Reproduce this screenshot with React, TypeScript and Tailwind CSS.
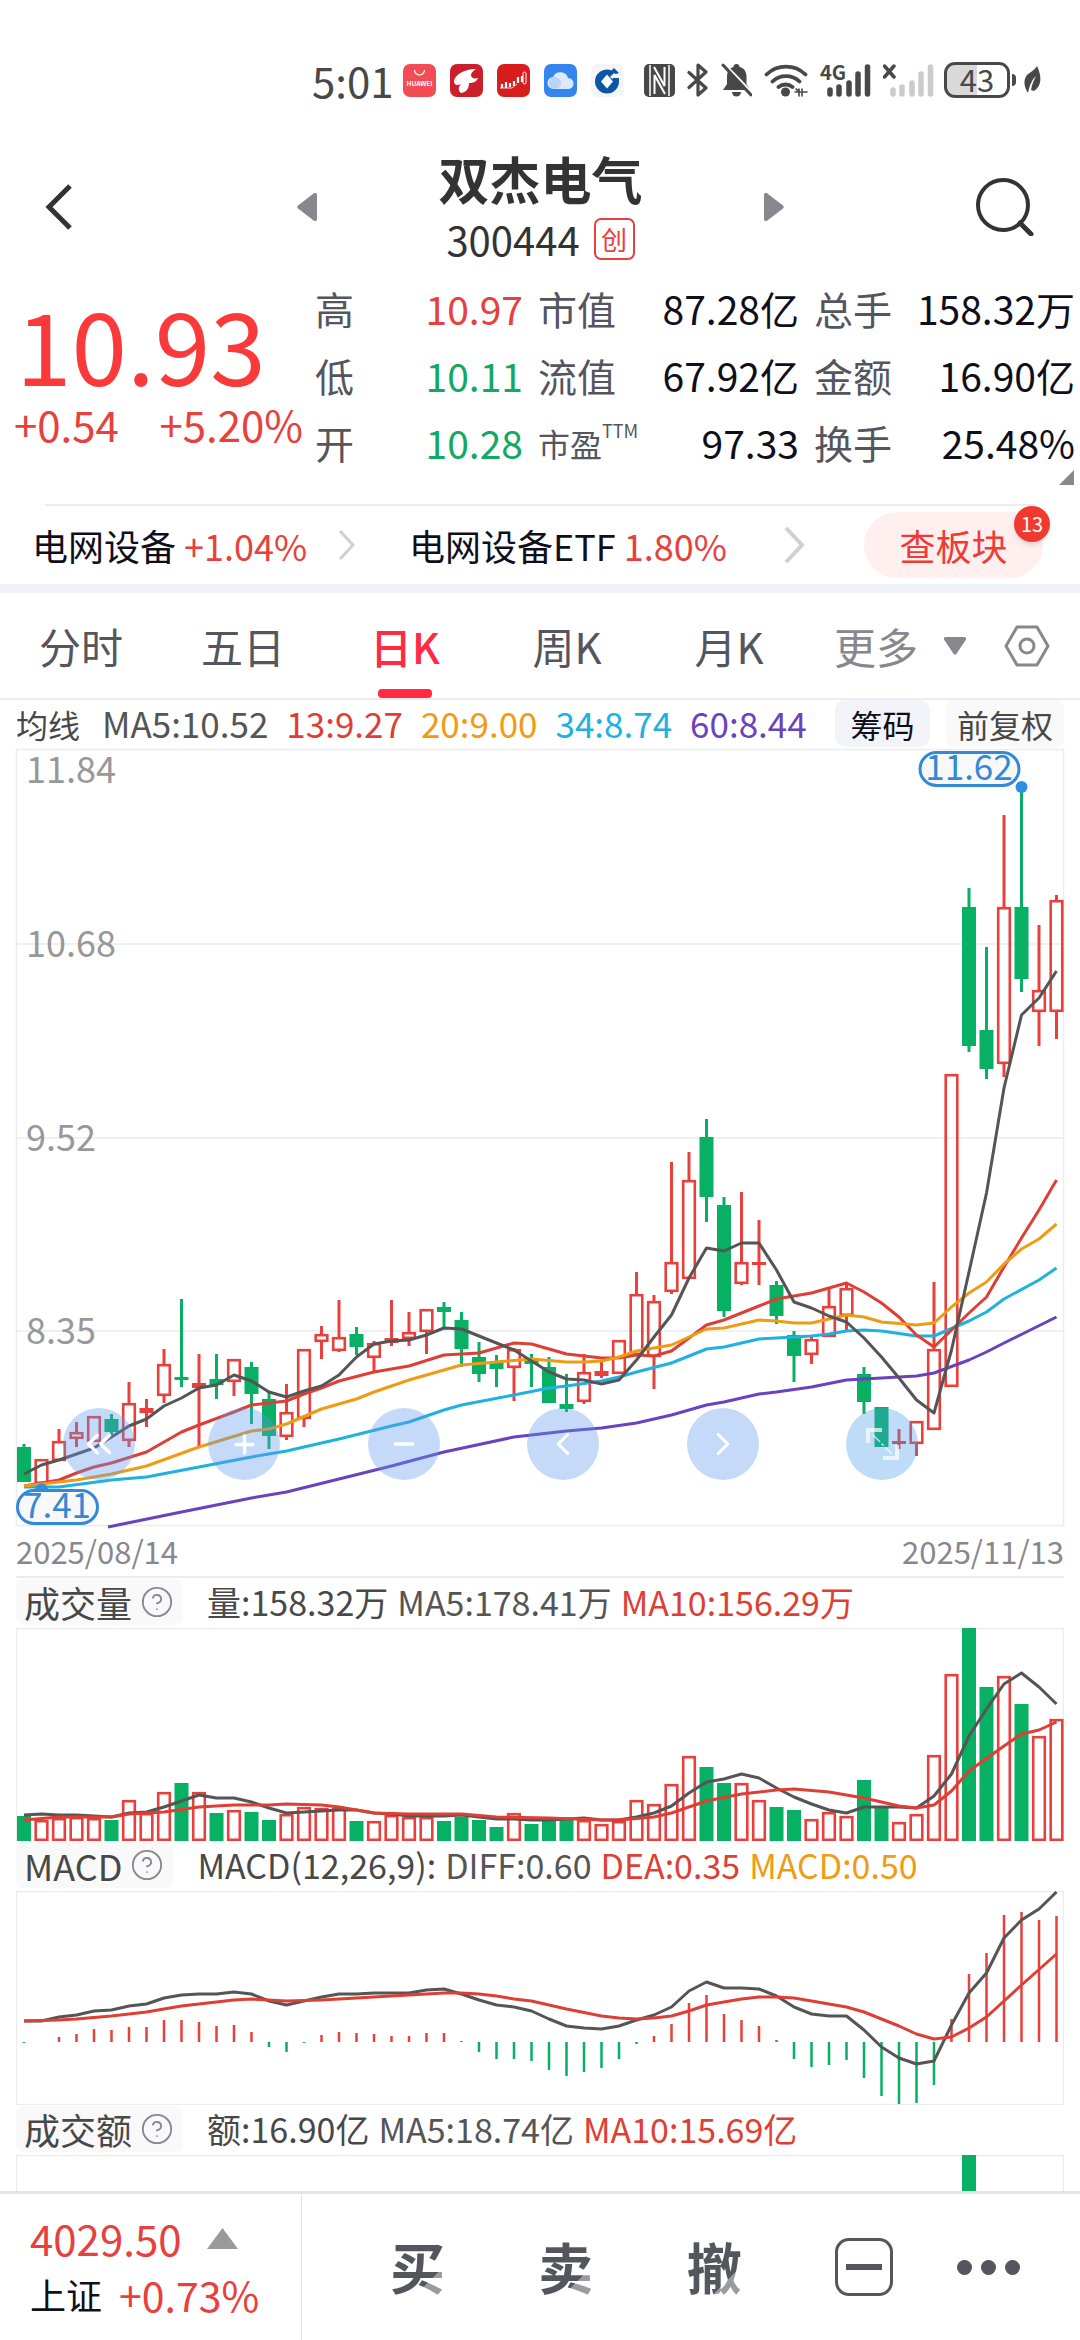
import { ChevronLeft, ChevronRight, ChevronsLeft, CircleHelp, Minus, Plus } from "lucide-react";

const RED = "#e8403c";
const GREEN = "#07b062";
const LINE_DARK = "#555555";
const LINE_RED = "#de3f35";
const GRID = "#ececec";

const STEP = 17.5;
const FIRST_X = 8;
const px = (i: number) => FIRST_X + i * STEP;

type Point = [number, number];

// [direction, high, body top, body bottom, low]
const CANDLES: [string, number, number, number, number][] = [
  ["g", 695, 698, 733, 733], ["r", 710, 710, 735, 737], ["r", 680, 692, 712, 712], ["r", 673, 683, 690, 698],
  ["r", 667, 667, 693, 693], ["g", 665, 670, 683, 688], ["r", 633, 654, 692, 698], ["r", 650, 659, 664, 678],
  ["r", 600, 615, 647, 654], ["g", 550, 628, 631, 638], ["r", 605, 634, 639, 698], ["g", 605, 630, 636, 650],
  ["r", 610, 610, 633, 647], ["g", 613, 618, 645, 675], ["g", 643, 650, 687, 700], ["r", 635, 663, 688, 691],
  ["r", 600, 600, 670, 678], ["r", 577, 585, 593, 610], ["r", 551, 588, 602, 603], ["g", 578, 585, 598, 606],
  ["r", 592, 594, 609, 624], ["r", 551, 589, 594, 597], ["r", 563, 583, 590, 597], ["r", 560, 560, 583, 605],
  ["g", 553, 558, 563, 578], ["g", 563, 571, 600, 618], ["g", 593, 608, 625, 633], ["g", 606, 613, 620, 638],
  ["r", 599, 600, 619, 652], ["g", 605, 611, 615, 638], ["g", 608, 618, 654, 654], ["g", 625, 655, 660, 663],
  ["r", 605, 623, 653, 655], ["r", 612, 622, 627, 629], ["r", 591, 591, 625, 625], ["r", 523, 545, 606, 606],
  ["r", 546, 552, 608, 640], ["r", 413, 513, 543, 545], ["r", 403, 431, 530, 530], ["g", 370, 388, 448, 473],
  ["g", 448, 456, 562, 568], ["r", 443, 513, 535, 536], ["r", 471, 513, 516, 536], ["g", 532, 536, 567, 575],
  ["g", 582, 586, 607, 633], ["r", 588, 590, 606, 615], ["r", 538, 557, 588, 588], ["r", 534, 539, 567, 582],
  ["g", 618, 625, 653, 665], ["g", 658, 658, 698, 698], ["r", 680, 692, 695, 700], ["r", 672, 672, 695, 707],
  ["r", 533, 600, 681, 681], ["r", 325, 325, 638, 638], ["g", 139, 158, 297, 303], ["g", 198, 281, 320, 330],
  ["r", 66, 158, 315, 328], ["g", 38, 158, 230, 243], ["r", 176, 241, 263, 297], ["r", 146, 151, 263, 290],
];

const series = (ys: number[]): Point[] => ys.map((y, i) => [i, y]);

const PRICE_LINES: { color: string; points: Point[] }[] = [
  {
    color: "#6a42bd",
    points: [[4.8, 778], [9, 763], [13, 749], [15, 743], [18, 730], [21, 717], [24, 703], [28, 688], [31, 682], [33, 679], [35, 674], [37, 666], [39, 656], [40, 653], [42, 645], [43, 643], [45, 638], [47, 631], [49, 629], [51, 627], [52, 624], [54, 611], [55, 603], [56, 594], [59, 568]],
  },
  {
    color: "#1fb1df",
    points: [[0, 738], [2, 738], [5, 731], [7, 728], [10, 718], [13, 708], [15, 702], [18, 690], [21, 677], [22, 673], [24, 661], [25, 656], [28, 646], [30, 639], [31, 637], [33, 632], [34, 628], [35, 623], [37, 614], [39, 600], [40, 598], [42, 590], [43, 589], [45, 587], [46, 585], [47, 582], [48, 581], [49, 582], [51, 587], [52, 587], [54, 572], [55, 563], [56, 550], [58, 531], [59, 519]],
  },
  {
    color: LINE_RED,
    points: [[0, 737], [1, 734], [2, 731], [3, 724], [4, 718], [5, 714], [7, 703], [8, 693], [9, 683], [10, 676], [12, 663], [13, 656], [14, 654], [15, 652], [16, 645], [17, 639], [18, 632], [20, 623], [21, 620], [22, 617], [24, 606], [26, 604], [28, 594], [29, 595], [31, 605], [33, 609], [34, 609], [35, 606], [36, 607], [37, 602], [38, 589], [39, 576], [40, 571], [42, 557], [43, 550], [44, 547], [45, 544], [46, 539], [47, 534], [48, 543], [49, 554], [50, 568], [51, 586], [52, 598], [53, 581], [54, 564], [55, 548], [56, 518], [57, 489], [58, 461], [59, 431]],
  },
  {
    color: "#ee9c15",
    points: [[0, 737], [3, 731], [5, 725], [7, 717], [10, 698], [13, 682], [14, 680], [15, 675], [17, 660], [18, 655], [19, 650], [20, 643], [21, 637], [22, 631], [25, 616], [27, 613], [29, 610], [31, 613], [32, 613], [33, 612], [34, 608], [35, 602], [37, 596], [38, 588], [39, 580], [40, 579], [42, 571], [43, 572], [44, 574], [45, 574], [46, 570], [47, 566], [48, 568], [49, 573], [51, 576], [52, 574], [53, 558], [54, 544], [55, 533], [56, 515], [57, 500], [58, 490], [59, 475]],
  },
  {
    color: LINE_DARK,
    points: series([725, 716, 711, 705, 699, 688, 677, 670, 657, 649, 639, 636, 626, 632, 643, 648, 642, 637, 626, 608, 595, 592, 591, 586, 579, 580, 587, 594, 601, 612, 623, 630, 631, 635, 631, 611, 588, 566, 529, 499, 502, 494, 494, 521, 553, 559, 567, 573, 589, 608, 629, 651, 664, 601, 523, 444, 339, 266, 249, 222]),
  },
];

const VOLUME_TOPS = [
  188, 192, 190, 189, 190, 192, 172, 185, 164, 155, 164, 185, 182, 184, 192, 186, 179, 180, 180, 193,
  193, 187, 189, 189, 193, 189, 192, 199, 185, 196, 192, 192, 192, 196, 193, 172, 176, 156, 128, 139,
  155, 155, 172, 179, 182, 191, 184, 188, 152, 180, 194, 186, 127, 46, 0, 59, 48, 76, 108, 91,
];

const VOLUME_MA5: Point[] = series([
  187, 186, 187, 187, 188, 189, 185, 184, 179, 173, 167, 170, 170, 174, 180, 185, 184, 183, 182, 182,
  185, 186, 188, 188, 188, 187, 189, 191, 191, 192, 192, 191, 190, 192, 192, 189, 185, 178, 165, 154,
  151, 146, 150, 160, 169, 176, 182, 185, 179, 179, 179, 180, 168, 146, 108, 81, 56, 45, 59, 76,
]);

const VOLUME_MA10: Point[] = [
  [0, 192], [2, 189], [5, 189], [6, 186], [7, 185], [8, 184], [10, 179], [12, 177], [14, 177], [15, 176], [17, 177], [18, 179], [19, 182], [20, 185], [22, 186], [25, 186], [27, 189], [30, 190], [33, 192], [34, 192], [36, 189], [37, 185], [38, 179], [39, 173], [41, 166], [43, 162], [44, 161], [46, 164], [48, 170], [50, 178], [51, 180], [52, 177], [53, 163], [54, 143], [56, 118], [57, 106], [58, 102], [59, 94],
];

const MACD_ZERO = 151;
const MACD_TIPS = [
  152, 151, 146, 143, 138, 139, 136, 136, 129, 129, 131, 135, 134, 141, 156, 161, 152, 144, 141, 142,
  143, 145, 145, 142, 142, 150, 161, 168, 168, 170, 179, 185, 181, 177, 168, 153, 145, 133, 112, 104,
  123, 129, 135, 149, 168, 176, 174, 169, 187, 205, 213, 212, 194, 128, 83, 62, 24, 21, 29, 25,
];

const DIFF: Point[] = series([
  130, 130, 126, 124, 120, 119, 115, 113, 107, 104, 103, 103, 101, 103, 110, 114, 110, 106, 103, 103,
  102, 102, 102, 99, 98, 103, 109, 114, 116, 120, 128, 135, 137, 138, 135, 129, 124, 116, 100, 91,
  97, 97, 98, 105, 116, 123, 125, 125, 139, 156, 167, 173, 170, 134, 102, 82, 47, 29, 18, 1,
]);

const DEA: Point[] = [
  [0, 130], [2, 129], [3, 128], [5, 125], [7, 121], [9, 115], [10, 113], [12, 109], [13, 108], [15, 110], [17, 109], [19, 107], [21, 105], [24, 102], [25, 102], [26, 103], [27, 105], [28, 108], [29, 110], [31, 118], [33, 125], [34, 127], [35, 128], [36, 127], [37, 125], [38, 120], [39, 114], [41, 108], [42, 106], [43, 106], [44, 107], [46, 113], [47, 116], [48, 121], [50, 135], [51, 143], [52, 148], [53, 146], [54, 137], [55, 126], [57, 94], [59, 63],
];

function Polyline({ points, color }: { points: Point[]; color: string }) {
  return (
    <polyline
      points={points.map(([i, y]) => `${px(i)},${y}`).join(" ")}
      fill="none"
      stroke={color}
      strokeWidth="3"
      strokeLinejoin="round"
    />
  );
}

function StatusBar() {
  return (
    <div className="flex h-[108px] items-center pt-[52px] pl-[312px] text-[#484848]">
      <span className="w-[91px] text-[42px] leading-none">5:01</span>
      <div className="flex items-center gap-[14px]">
        <svg className="h-[33px] w-[33px]" viewBox="0 0 33 33">
          <rect width="33" height="33" rx="7" fill="#f24c55" />
          <path d="M11.500 6a5 5 0 0 0 10 0" fill="none" stroke="#fff" strokeWidth="1.200" />
          <text x="16.500" y="21.500" textAnchor="middle" fontSize="6.500" fontWeight="bold" fill="#fff">HUAWEI</text>
        </svg>
        <svg className="h-[33px] w-[33px]" viewBox="0 0 33 33">
          <rect width="33" height="33" rx="7" fill="#c9202c" />
          <path d="M26 5C14 5 5 11 4 17c0 4 3 5 7 3-3 3-3 7 0 9 6-1 8-5 8-10 5 0 8-2 9-5-4 1-7 0-7-3 0-2 2-4 5-6Z" fill="#fff" />
        </svg>
        <svg className="h-[33px] w-[33px]" viewBox="0 0 33 33">
          <rect width="33" height="33" rx="7" fill="#d91d1d" />
          <path d="M5 20v4M9 18v6M13 19v4M17 17v5M21 13v6M25 12v6" stroke="#fff" strokeWidth="2.200" />
          <rect x="26" y="8" width="3" height="12" rx="1.500" fill="none" stroke="#fff" />
          <path d="M3 24h12l5-4" fill="none" stroke="#fff" strokeWidth="0.800" />
        </svg>
        <svg className="h-[33px] w-[33px]" viewBox="0 0 33 33">
          <rect width="33" height="33" rx="7" fill="#3585ee" />
          <path d="M10 25a6 6 0 0 1-1-12 8 8 0 0 1 15 1 5.500 5.500 0 0 1 0 11Z" fill="#dceafd" />
          <circle cx="11" cy="19" r="6" fill="#b7d5fb" />
        </svg>
        <svg className="h-[33px] w-[33px]" viewBox="0 0 33 33">
          <rect width="33" height="33" rx="7" fill="#f4f5f6" />
          <circle cx="16" cy="17.500" r="12" fill="#0b57a4" />
          <path d="M16 10.500 22 17.500l-6 7-6-7Z" fill="#fff" />
          <path d="m19 13 6-6 4 2v6l-6 1Z" fill="#f4f5f6" />
          <path d="m18 9 5-5 5 5-3 1-3-1-3 3ZM22 14h6v2l-2 2h-4Z" fill="#0b57a4" />
        </svg>
      </div>
      <svg className="ml-[20px] h-[33px] w-[31px]" viewBox="0 0 31 33">
        <rect width="31" height="33" rx="5" fill="#484848" />
        <path d="M6 1v31M25 1v31" stroke="#fff" strokeWidth="1.500" />
        <path d="M10.500 30V11L21 30M20.500 3v19L10 3" fill="none" stroke="#fff" strokeWidth="2" />
      </svg>
      <svg className="ml-[12px] h-[34px] w-[22px]" viewBox="0 0 22 34" fill="none" stroke="#484848" strokeWidth="3.200" strokeLinejoin="round" strokeLinecap="round">
        <path d="M2 9.500 19 25l-8 7V2l8 7L2 24.500" />
      </svg>
      <svg className="ml-[12px] h-[34px] w-[31px]" viewBox="0 0 31 34">
        <path d="M15.500 1c2 0 3 1 3 3 5 1 7 5 7 10v7l4 6H2l4-6v-7c0-5 2-9 6.500-10 0-2 1-3 3-3Z" fill="#484848" />
        <path d="M2 0l29 30" stroke="#fff" strokeWidth="3" />
        <path d="M2 2l28 30" stroke="#484848" strokeWidth="3" strokeLinecap="round" />
        <path d="M11 29h9a4.500 4.500 0 0 1-9 0Z" fill="#484848" />
      </svg>
      <svg className="ml-[12px] h-[34px] w-[44px]" viewBox="0 0 44 34" fill="none" stroke="#484848" strokeWidth="3.800" strokeLinecap="round">
        <path d="M2.500 11.500a28 28 0 0 1 39 0M8.500 18.500a19.500 19.500 0 0 1 27 0M14.500 24a11 11 0 0 1 14 0" />
        <circle cx="21.500" cy="29" r="4.500" fill="#484848" stroke="none" />
        <path d="M31 29h5l-4-3M35 26v7M43 29h-5v-3M38 26v7" strokeWidth="1.600" />
      </svg>
      <svg className="ml-[12px] h-[34px] w-[51px] overflow-visible" viewBox="0 0 51 34" stroke="#484848" strokeWidth="5.500" strokeLinecap="round">
        <text x="0" y="17" fontSize="20" fontWeight="bold" fill="#484848" stroke="none">4G</text>
        <path d="M10 27v4M19 24v7M29 20v11M38 11v20M47.500 4v27" />
      </svg>
      <svg className="ml-[12px] h-[34px] w-[51px]" viewBox="0 0 51 34" stroke="#cbcbcb" strokeWidth="5.500" strokeLinecap="round">
        <path d="M1.500 3 11 14M11 3 1.500 14" stroke="#484848" strokeWidth="3.500" />
        <path d="M10 27v4M19 24v7M29 20v11M38 11v20M47.500 4v27" />
      </svg>
      <div className="ml-[10px] flex h-[36px] w-[66px] items-center justify-center rounded-[11px] border-[3px] border-[#484848] bg-linear-to-r from-[#d9d9d9] from-50% to-white to-50% pb-[4px] text-[31px] leading-none">
        43
      </div>
      <div className="ml-[2px] h-[12px] w-[4px] rounded-r-full bg-[#484848]" />
      <svg className="ml-[7px] h-[30px] w-[19px]" viewBox="0 0 19 30">
        <path d="M14 1c4 8 6 19-3 25l-3-1c1-6 3-10 5-14-4 4-6 8-8 17C1 22 0 15 4 10c3-3 7-4 10-9Z" fill="#484848" />
      </svg>
    </div>
  );
}

function Header() {
  return (
    <header className="flex h-[162px] items-center justify-between pt-[36px] pr-[46px] pl-[45px] text-[#333]">
      <button type="button" aria-label="返回" className="w-[60px]">
        <svg className="h-[46px] w-[28px]" viewBox="0 0 28 46" fill="none" stroke="#333" strokeWidth="5">
          <path d="M25 2 4 23l21 21" />
        </svg>
      </button>
      <div className="flex w-[488px] items-center justify-between">
        <button type="button" aria-label="上一只">
          <svg className="h-[28px] w-[20px]" viewBox="0 0 20 28" fill="#88878e">
            <path d="M20 2v24c0 2-2 3-4 1L1 15.500c-1-1-1-2 0-3L16 1c2-2 4-1 4 1Z" />
          </svg>
        </button>
        <div className="flex flex-col items-center">
          <h1 className="text-[51px] leading-[64px] font-bold">双杰电气</h1>
          <div className="flex h-[58px] items-center gap-[14px]">
            <span className="text-[40px] leading-none">300444</span>
            <span className="flex h-[42px] w-[41px] items-center justify-center rounded-[7px] border-2 border-[#e8403c] text-[26px] leading-none text-[#e8403c]">
              创
            </span>
          </div>
        </div>
        <button type="button" aria-label="下一只">
          <svg className="h-[28px] w-[20px]" viewBox="0 0 20 28" fill="#88878e">
            <path d="M0 2v24c0 2 2 3 4 1l15-11.500c1-1 1-2 0-3L4 1C2-1 0 0 0 2Z" />
          </svg>
        </button>
      </div>
      <button type="button" aria-label="搜索">
        <svg className="h-[58px] w-[58px]" viewBox="0 0 58 58" fill="none" stroke="#333" strokeWidth="4">
          <circle cx="27" cy="27" r="25" />
          <path d="m44 45 11 11" strokeWidth="5" strokeLinecap="round" />
        </svg>
      </button>
    </header>
  );
}

const STATS = [
  { label: "高", value: "10.97", color: "text-[#e8403c]" },
  { label: "市值", value: "87.28亿", color: "text-[#0f0f1c]" },
  { label: "总手", value: "158.32万", color: "text-[#0f0f1c]" },
  { label: "低", value: "10.11", color: "text-[#14a862]" },
  { label: "流值", value: "67.92亿", color: "text-[#0f0f1c]" },
  { label: "金额", value: "16.90亿", color: "text-[#0f0f1c]" },
  { label: "开", value: "10.28", color: "text-[#14a862]" },
  { label: "市盈", value: "97.33", color: "text-[#0f0f1c]", sup: "TTM" },
  { label: "换手", value: "25.48%", color: "text-[#0f0f1c]" },
];

function Quote() {
  return (
    <section className="relative flex pt-[5px] pr-[5px] pb-[28px]">
      <div className="w-[315px] shrink-0 pt-[18px] text-[#fa3a3a]">
        <div className="pl-[16px] text-[100px] leading-[100px]">10.93</div>
        <div className="flex justify-between pr-[12px] pl-[14px] text-[42px] leading-[62px] text-[#e8403c]">
          <span>+0.54</span>
          <span>+5.20%</span>
        </div>
      </div>
      <dl className="grid flex-1 grid-cols-[208fr_261fr_261fr] gap-x-[15px]">
        {STATS.map((s) => (
          <div key={s.label} className="flex h-[67px] items-center justify-between whitespace-nowrap">
            <dt className={s.sup ? "flex text-[32px] text-[#54555d]" : "text-[39px] text-[#54555d]"}>
              {s.label}
              {s.sup && <sup className="top-0 mt-[2px] text-[18px] leading-none">{s.sup}</sup>}
            </dt>
            <dd className={`text-[39px] ${s.color}`}>{s.value}</dd>
          </div>
        ))}
      </dl>
      <svg className="absolute right-[6px] bottom-[19px] h-[15px] w-[15px]" viewBox="0 0 15 15">
        <path d="M15 0v15H0Z" fill="#88878e" />
      </svg>
    </section>
  );
}

function Sectors() {
  return (
    <section>
      <div className="mx-[45px] h-[2px] bg-[#ececec]" />
      <div className="flex h-[78px] items-center pr-[37px] pl-[32px] text-[36px] whitespace-nowrap text-[#0f0f1c]">
        <a href="#sector" className="flex w-[324px] items-center justify-between">
          <span>
            电网设备 <span className="text-[#e8403c]">+1.04%</span>
          </span>
          <svg className="h-[30px] w-[18px]" viewBox="0 0 18 30" fill="none" stroke="#d0d0d0" strokeWidth="3">
            <path d="m2 1 13 14L2 29" />
          </svg>
        </a>
        <a href="#etf" className="ml-[53px] flex flex-1 items-center justify-between">
          <span>
            电网设备ETF <span className="text-[#e8403c]">1.80%</span>
          </span>
          <svg className="h-[36px] w-[21px]" viewBox="0 0 21 36" fill="none" stroke="#d0d0d0" strokeWidth="4">
            <path d="m2 1 16 17L2 35" />
          </svg>
        </a>
        <button type="button" className="relative ml-[59px] h-[66px] w-[179px] rounded-full bg-[#ffefef] text-[36px] text-[#ee3b35]">
          查板块
          <span className="absolute -top-[6px] -right-[7px] flex h-[36px] w-[36px] items-center justify-center rounded-full bg-[#f03a30] text-[20px] leading-none text-white shadow-md">
            13
          </span>
        </button>
      </div>
      <div className="h-[9px] bg-[#f1f2f8]" />
    </section>
  );
}

const TABS = ["分时", "五日", "日K", "周K", "月K"];

function PeriodTabs() {
  return (
    <nav className="flex h-[107px] border-b-2 border-[#ececec] text-[42px] text-[#54555d]">
      {TABS.map((tab) => {
        const active = tab === "日K";
        return (
          <button
            key={tab}
            type="button"
            className={`relative flex flex-1 items-center justify-center ${active ? "font-medium text-[#ff2a43]" : ""}`}
          >
            {tab}
            {active && <span className="absolute bottom-0 h-[9px] w-[54px] rounded-[4px] bg-[#ff2a43]" />}
          </button>
        );
      })}
      <div className="flex w-[270px] shrink-0 items-center pl-[24px]">
        <button type="button" className="flex items-center text-[#88878e]">
          更多
          <svg className="ml-[26px] h-[18px] w-[22px]" viewBox="0 0 22 18" fill="#88878e">
            <path d="M2 0h18c2 0 3 2 1 4l-8 12c-1 2-3 2-4 0L1 4C-1 2 0 0 2 0Z" />
          </svg>
        </button>
        <button type="button" aria-label="设置" className="ml-[38px]">
          <svg className="h-[42px] w-[46px]" viewBox="0 0 46 42" fill="none" stroke="#88878e" strokeWidth="3">
            <path d="M13 2h20l11 19-11 19H13L2 21Z" strokeLinejoin="round" />
            <circle cx="23" cy="21" r="7" />
          </svg>
        </button>
      </div>
    </nav>
  );
}

function MaRow() {
  return (
    <div className="flex h-[49px] items-center px-[16px] pb-[2px] text-[35px] leading-none whitespace-nowrap">
      <span className="text-[32px] text-[#484848]">均线</span>
      <div className="ml-[22px] flex flex-1 gap-[18px] pb-[2px]">
        <span className="text-[#555]">MA5:10.52</span>
        <span className="text-[#de3f35]">13:9.27</span>
        <span className="text-[#ee9c15]">20:9.00</span>
        <span className="text-[#1fb1df]">34:8.74</span>
        <span className="text-[#6a42bd]">60:8.44</span>
      </div>
      <button type="button" className="h-[47px] w-[95px] rounded-[10px] bg-[#f3f4f9] text-[32px] text-[#0f0f1c]">
        筹码
      </button>
      <button type="button" className="ml-[16px] h-[47px] w-[118px] rounded-[8px] bg-[#f9f9f9] text-[32px] text-[#484848]">
        前复权
      </button>
    </div>
  );
}

function Candle({ i, data }: { i: number; data: (typeof CANDLES)[number] }) {
  const [dir, high, top, bottom, low] = data;
  const x = px(i);
  const h = bottom - top;
  if (dir === "g") {
    return (
      <g fill={GREEN}>
        <rect x={x - 1.5} y={high} width="3" height={low - high} />
        <rect x={x - 7} y={top} width="14" height={h} />
      </g>
    );
  }
  return (
    <g fill={RED}>
      <rect x={x - 1.5} y={high} width="3" height={top - high} />
      <rect x={x - 1.5} y={bottom} width="3" height={low - bottom} />
      {h > 6 ? (
        <rect x={x - 5.8} y={top + 1.2} width="11.6" height={h - 2.4} fill="none" stroke={RED} strokeWidth="2.6" />
      ) : (
        <rect x={x - 7} y={top} width="14" height={h} />
      )}
    </g>
  );
}

const CHART_BUTTONS = [
  { label: "放大", tint: "bg-[#5e98ee]/36", icon: <Plus size={29} strokeWidth={2.8} /> },
  { label: "缩小", tint: "bg-[#5e98ee]/36", icon: <Minus size={30} strokeWidth={2.8} /> },
  { label: "左移", tint: "bg-[#5e98ee]/36", icon: <ChevronLeft size={38} strokeWidth={2} /> },
  { label: "右移", tint: "bg-[#5e98ee]/36", icon: <ChevronRight size={38} strokeWidth={2} /> },
  {
    label: "全屏",
    tint: "bg-[#4b9ae8]/36",
    icon: (
      <svg width="36" height="36" viewBox="0 0 36 36" fill="none" stroke="currentColor" strokeWidth="4" opacity="0.7">
        <path d="M4 17V4h14M19 32h14V19" />
        <path d="m9 9 19 19" strokeWidth="1.5" strokeDasharray="10 2 3 2" />
      </svg>
    ),
  },
];

function PriceChart() {
  return (
    <div className="relative mx-[16px]">
      <svg className="block w-full overflow-visible" viewBox="0 0 1048 777">
        <rect x="0.5" y="0.5" width="1047" height="776" fill="none" stroke={GRID} strokeWidth="1.5" />
        <path d="M0 195h1048M0 389h1048M0 582h1048" stroke={GRID} strokeWidth="1.5" />
        <g fontSize="36" fill="#989898">
          <text x="10" y="34">11.84</text>
          <text x="10" y="208">10.68</text>
          <text x="10" y="402">9.52</text>
          <text x="10" y="595">8.35</text>
        </g>
        {CANDLES.map((c, i) => (
          <Candle key={i} i={i} data={c} />
        ))}
        {PRICE_LINES.map((line) => (
          <Polyline key={line.color} {...line} />
        ))}
        <g fill="#2d8fe4">
          <circle cx={px(57)} cy="38" r="6" />
          <path d="M19 741a6.500 6.500 0 0 1 13 0Z" />
        </g>
        <g fontSize="35" fill="#3389d6" textAnchor="middle">
          <rect x="904" y="3.500" width="99" height="33" rx="16.500" fill="#f8f8f8" stroke="#3389d6" strokeWidth="3" />
          <text x="953" y="31">11.62</text>
          <rect x="1.500" y="741.500" width="80" height="33" rx="16.500" fill="#f8f8f8" stroke="#3389d6" strokeWidth="3" />
          <text x="41" y="769">7.41</text>
        </g>
      </svg>
      <div className="absolute right-[146px] bottom-[46px] left-[47px] flex text-white">
        <button
          type="button"
          aria-label="最左"
          className="flex h-[72px] w-[72px] items-center justify-center rounded-full bg-[#5e98ee]/36"
        >
          <ChevronsLeft size={42} strokeWidth={2} />
        </button>
        <div className="ml-[73px] flex flex-1 justify-between">
          {CHART_BUTTONS.map((b) => (
            <button
              key={b.label}
              type="button"
              aria-label={b.label}
              className={`flex h-[72px] w-[72px] items-center justify-center rounded-full ${b.tint}`}
            >
              {b.icon}
            </button>
          ))}
        </div>
      </div>
    </div>
  );
}

function IndicatorHeader({ name, values }: { name: string; values: { text: string; color: string }[] }) {
  return (
    <div className="mx-[16px] flex h-[50px] items-center pb-[2px] text-[34px] leading-none whitespace-nowrap">
      <button type="button" className="flex h-[46px] items-center gap-[8px] rounded-[8px] bg-[#f9f9f9] pr-[9px] pl-[8px] text-[36px] text-[#484848]">
        {name}
        <CircleHelp size={34} strokeWidth={1.3} className="text-[#88878e]" />
      </button>
      <div className="ml-[24px] flex gap-[9px]">
        {values.map((v) => (
          <span key={v.text} className={v.color}>
            {v.text}
          </span>
        ))}
      </div>
    </div>
  );
}

function VolumeChart() {
  return (
    <svg className="mx-[16px] block" viewBox="0 0 1048 213">
      <path d="M0.500 213V0.500H1047.500V213" fill="none" stroke={GRID} strokeWidth="1.500" />
      {VOLUME_TOPS.map((top, i) =>
        CANDLES[i][0] === "g" ? (
          <rect key={i} x={px(i) - 7} y={top} width="14" height={213 - top} fill={GREEN} />
        ) : (
          <rect key={i} x={px(i) - 5.8} y={top + 1.2} width="11.6" height={210.6 - top} fill="none" stroke={RED} strokeWidth="2.6" />
        )
      )}
      <Polyline points={VOLUME_MA5} color={LINE_DARK} />
      <Polyline points={VOLUME_MA10} color={LINE_RED} />
    </svg>
  );
}

function MacdChart() {
  return (
    <svg className="mx-[16px] block" viewBox="0 0 1048 214">
      <rect x="0.500" y="0.500" width="1047" height="213" fill="none" stroke={GRID} strokeWidth="1.500" />
      {MACD_TIPS.map((tip, i) => (
        <rect
          key={i}
          x={px(i) - 1.25}
          y={Math.min(tip, MACD_ZERO)}
          width="2.5"
          height={Math.abs(tip - MACD_ZERO)}
          fill={tip > MACD_ZERO ? GREEN : RED}
        />
      ))}
      <Polyline points={DIFF} color={LINE_DARK} />
      <Polyline points={DEA} color={LINE_RED} />
    </svg>
  );
}

function BottomBar() {
  const action =
    "bg-linear-135 from-[#54555d] from-72% to-[#9a9aa0] to-72% bg-clip-text pb-[4px] text-[55px] leading-none font-bold text-transparent";
  return (
    <footer className="flex h-[149px] shrink-0 border-t-[3px] border-[#e4e4e4] bg-white">
      <div className="w-[302px] shrink-0 border-r border-[#e4e4e4] pt-[16px] pl-[30px] whitespace-nowrap">
        <div className="flex items-center gap-[25px] text-[42px] leading-[56px] text-[#e8403c]">
          4029.50
          <svg className="h-[21px] w-[31px]" viewBox="0 0 31 21">
            <path d="M15.500 0 31 21H0Z" fill="#9a9a9a" />
          </svg>
        </div>
        <div className="flex items-center gap-[17px] leading-[56px]">
          <span className="text-[36px] text-[#0f0f1c]">上证</span>
          <span className="text-[41px] text-[#e8403c]">+0.73%</span>
        </div>
      </div>
      <div className="flex flex-1 items-center pr-[60px] pl-[88px]">
        <div className="flex flex-1 items-center justify-between">
          <button type="button" className={action}>买</button>
          <button type="button" className={action}>卖</button>
          <button type="button" className={action}>撤</button>
          <button type="button" aria-label="收起" className="flex h-[58px] w-[58px] items-center justify-center rounded-[14px] border-[3px] border-[#54555d]">
            <span className="h-[6px] w-[36px] bg-[#54555d]" />
          </button>
        </div>
        <button type="button" aria-label="更多操作" className="ml-[64px] flex gap-[9px]">
          <span className="h-[15px] w-[15px] rounded-full bg-[#54555d]" />
          <span className="h-[15px] w-[15px] rounded-full bg-[#54555d]" />
          <span className="h-[15px] w-[15px] rounded-full bg-[#54555d]" />
        </button>
      </div>
    </footer>
  );
}

export default function App() {
  return (
    <div className="flex h-screen flex-col bg-white font-['Noto_Sans_CJK_SC',sans-serif]">
      <main className="min-h-0 flex-1 overflow-hidden">
        <StatusBar />
        <Header />
        <Quote />
        <Sectors />
        <PeriodTabs />
        <MaRow />
        <PriceChart />
        <div className="mx-[16px] flex h-[52px] items-center justify-between border-b-2 border-[#ececec] pb-[2px] text-[31px] leading-none text-[#88878e]">
          <time>2025/08/14</time>
          <time>2025/11/13</time>
        </div>
        <IndicatorHeader
          name="成交量"
          values={[
            { text: "量:158.32万", color: "text-[#484848]" },
            { text: "MA5:178.41万", color: "text-[#555]" },
            { text: "MA10:156.29万", color: "text-[#de3f35]" },
          ]}
        />
        <VolumeChart />
        <IndicatorHeader
          name="MACD"
          values={[
            { text: "MACD(12,26,9):", color: "text-[#484848]" },
            { text: "DIFF:0.60", color: "text-[#555]" },
            { text: "DEA:0.35", color: "text-[#de3f35]" },
            { text: "MACD:0.50", color: "text-[#ee9c15]" },
          ]}
        />
        <MacdChart />
        <IndicatorHeader
          name="成交额"
          values={[
            { text: "额:16.90亿", color: "text-[#484848]" },
            { text: "MA5:18.74亿", color: "text-[#555]" },
            { text: "MA10:15.69亿", color: "text-[#de3f35]" },
          ]}
        />
        <svg className="mx-[16px] block" viewBox="0 0 1048 213">
          <path d="M0.500 213V0.500H1047.500V213" fill="none" stroke={GRID} strokeWidth="1.500" />
          <rect x={px(54) - 7} y="0" width="14" height="213" fill={GREEN} />
        </svg>
      </main>
      <BottomBar />
    </div>
  );
}
